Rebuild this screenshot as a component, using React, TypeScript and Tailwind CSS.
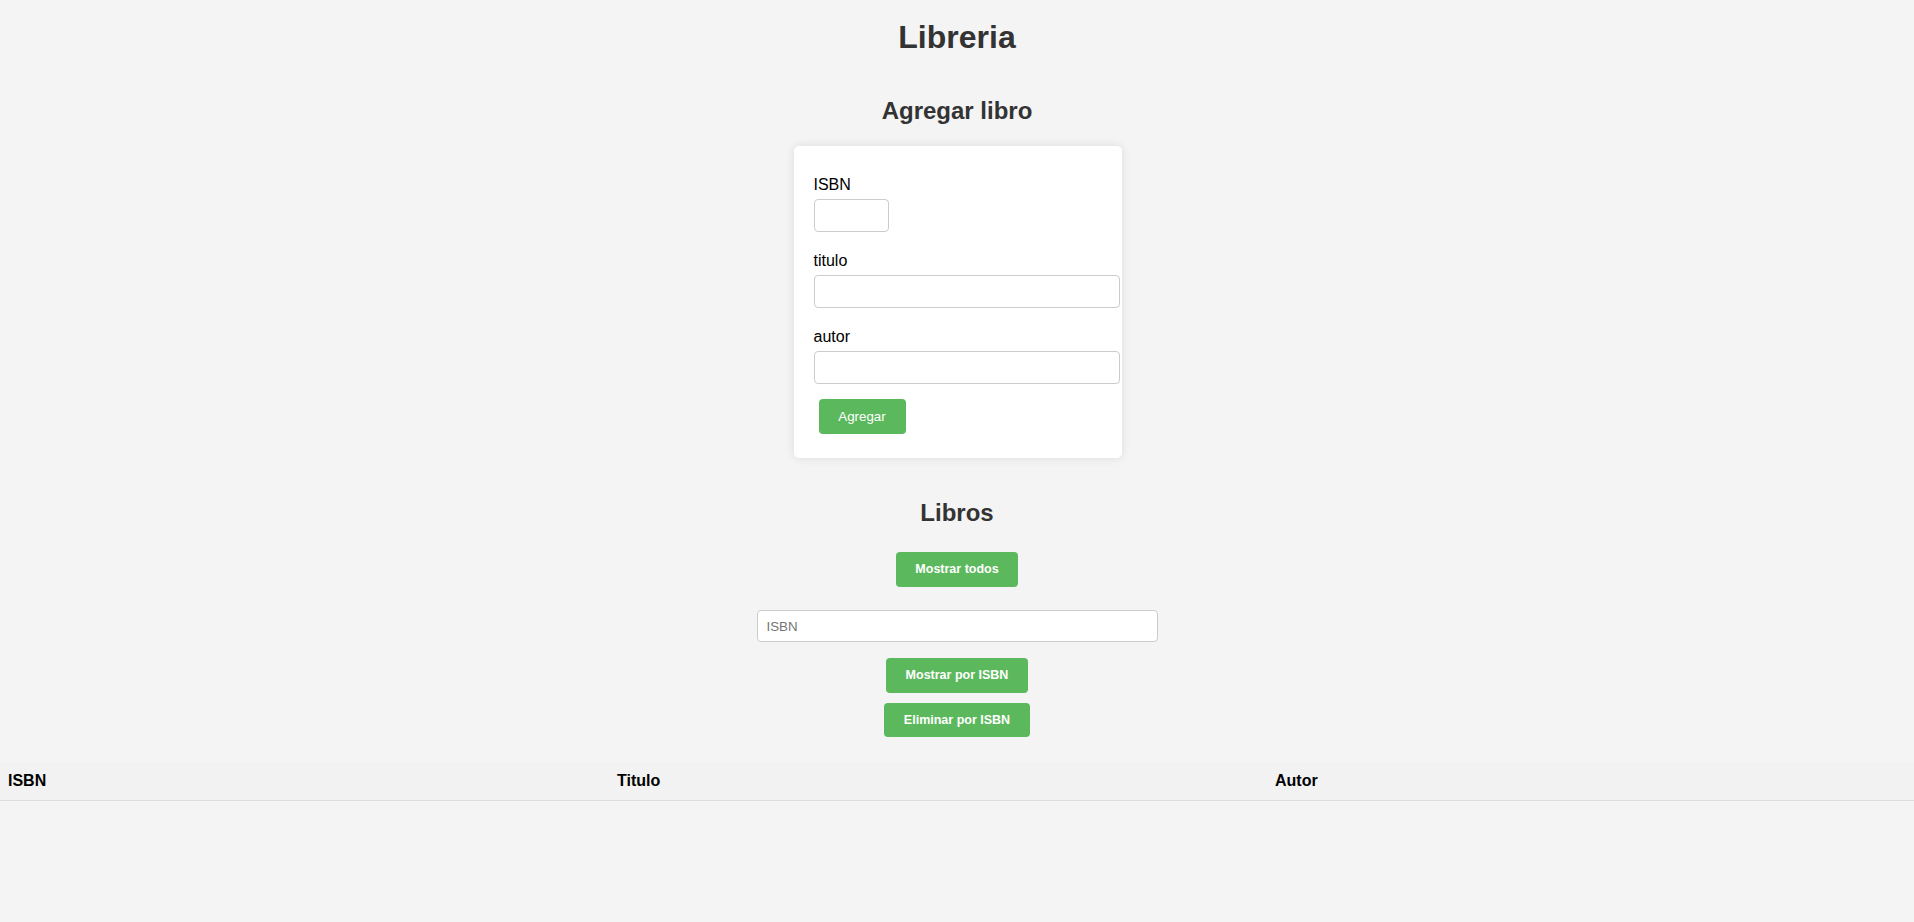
import React from "react";

export default function App() {
  const font = { fontFamily: '"Liberation Sans", Arial, Helvetica, sans-serif' };
  return (
    <div className="min-h-[922px] w-full bg-[#f4f4f4]" style={font}>
      <div className="flex flex-col items-center pt-[19px]">
        <h1 className="text-[32px] leading-[37px] font-bold text-[#333]">Libreria</h1>
        <h2 className="mt-[41px] text-[24px] leading-[28px] font-bold text-[#333]">Agregar libro</h2>

        <div className="mt-[21px] ml-[1px] w-[328px] rounded-[5px] bg-white px-5 pt-[30px] pb-[24px] shadow-[0_0_10px_rgba(0,0,0,0.1)]">
          <div className="flex flex-col">
            <label className="mb-[5px] text-[16px] leading-[18px] text-black">ISBN</label>
            <input className="box-border h-[33px] w-[75px] rounded-[4px] border border-[#ccc] px-2 text-[13.33px] outline-none" />
          </div>
          <div className="mt-5 flex flex-col">
            <label className="mb-[5px] text-[16px] leading-[18px] text-black">titulo</label>
            <input className="box-border h-[33px] w-[306px] rounded-[4px] border border-[#ccc] px-2 text-[13.33px] outline-none" />
          </div>
          <div className="mt-5 flex flex-col">
            <label className="mb-[5px] text-[16px] leading-[18px] text-black">autor</label>
            <input className="box-border h-[33px] w-[306px] rounded-[4px] border border-[#ccc] px-2 text-[13.33px] outline-none" />
          </div>
          <button className="ml-[5px] mt-[15px] flex h-[35px] w-[87px] items-center justify-center rounded-[4px] bg-[#5cb85c] text-[13.33px] text-white">
            Agregar
          </button>
        </div>

        <h2 className="mt-[41px] text-[24px] leading-[28px] font-bold text-[#333]">Libros</h2>

        <button className="mt-[25px] flex h-[35px] w-[122px] items-center justify-center rounded-[4px] bg-[#5cb85c] text-[12.5px] font-bold text-white">
          Mostrar todos
        </button>

        <input
          placeholder="ISBN"
          className="mt-[23px] box-border h-[32px] w-[401px] rounded-[4px] border border-[#ccc] bg-white px-[9px] text-[13.33px] text-black outline-none placeholder:text-[#757575]"
        />

        <button className="mt-[16px] flex h-[35px] w-[142px] items-center justify-center rounded-[4px] bg-[#5cb85c] text-[12.5px] font-bold text-white">
          Mostrar por ISBN
        </button>
        <button className="mt-[10px] flex h-[34px] w-[146px] items-center justify-center rounded-[4px] bg-[#5cb85c] text-[12.5px] font-bold text-white">
          Eliminar por ISBN
        </button>
      </div>

      <div className="mt-[25px] w-full">
        <div className="grid h-[39px] grid-cols-[609px_658px_1fr] items-center border-b border-[#ddd] bg-[#f2f2f2] text-[16px] font-bold text-black">
          <div className="px-2">ISBN</div>
          <div className="px-2">Titulo</div>
          <div className="px-2">Autor</div>
        </div>
      </div>
    </div>
  );
}
